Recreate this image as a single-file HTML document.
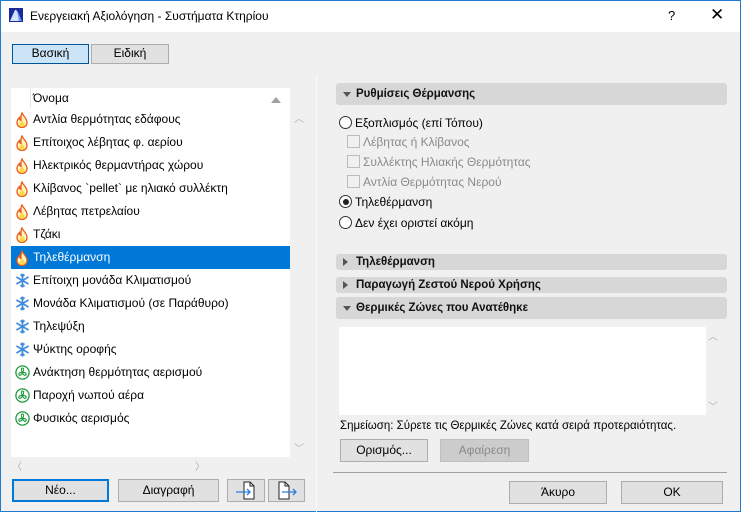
<!DOCTYPE html>
<html><head><meta charset="utf-8"><style>
*{box-sizing:border-box;margin:0;padding:0}
body{width:741px;height:512px;overflow:hidden;background:#f0f0f0;font-family:"Liberation Sans","DejaVu Sans",sans-serif;font-size:12px;color:#000;position:relative}
.a{position:absolute}
.win{left:0;top:0;width:741px;height:512px;border:1px solid #1e7bd0}
.tb{left:1px;top:1px;width:739px;height:31px;background:#fff}
.btn{position:absolute;background:#e1e1e1;border:1px solid #adadad;text-align:center;font-size:12px}
.row{position:absolute;left:11px;width:279px;height:23px;line-height:23px;padding-left:22px;white-space:nowrap;font-size:12px}
.row svg{position:absolute;left:4px;top:4px}
.sel{background:#0078d7;color:#fff}
.hdr{position:absolute;left:336px;width:391px;background:#d7d7d7;border-radius:3px;font-weight:bold;font-size:11.5px;padding-left:20px;color:#111}
.tri{position:absolute;left:7px;width:0;height:0}
.down{border-left:4px solid transparent;border-right:4px solid transparent;border-top:5px solid #555}
.right{border-top:4px solid transparent;border-bottom:4px solid transparent;border-left:5px solid #555}
.rad{position:absolute;width:13px;height:13px;border:1px solid #333;border-radius:50%;background:#fff}
.chk{position:absolute;width:13px;height:13px;border:1px solid #bcbcbc;background:#f0f0f0}
.lbl{position:absolute;font-size:12px;white-space:nowrap}
.dis{color:#8a8a8a}
.ar{position:absolute;color:#b0b0b0;font-size:10px}
</style></head><body>
<div class="a win"></div>
<div class="a tb"></div>
<svg class="a" style="left:9px;top:8px" width="14" height="14" viewBox="0 0 14 14"><rect width="14" height="14" fill="#1a2a9a"/><path d="M1 13 L6 2 Q9 1 10 13Z" fill="#cfe3ff"/><path d="M8 2 L13 13 H10Z" fill="#6a8bff"/></svg>
<div class="lbl" style="left:30px;top:9px;font-size:12px">Ενεργειακή Αξιολόγηση - Συστήματα Κτηρίου</div>
<div class="lbl" style="left:668px;top:8px;font-size:13px">?</div>
<div class="lbl" style="left:710px;top:5px;font-size:17px;font-weight:300">✕</div>

<div class="btn" style="left:12px;top:44px;width:77px;height:20px;line-height:17px;background:#cce4f7;border:1px solid #005499">Βασική</div>
<div class="btn" style="left:91px;top:44px;width:78px;height:20px;line-height:17px">Ειδική</div>

<div class="a" style="left:316px;top:75px;width:1px;height:437px;background:#fbfbfb"></div>

<div class="a" style="left:11px;top:88px;width:279px;height:369px;background:#fff"></div>
<div class="a" style="left:30px;top:88px;width:1px;height:20px;background:#e5e5e5"></div>
<div class="lbl" style="left:33px;top:91px">Όνομα</div>
<div class="a" style="left:271px;top:97px;border-left:5px solid transparent;border-right:5px solid transparent;border-bottom:6px solid #a0a0a0"></div>

<div id="rows"></div>
<div class="ar" style="left:294px;top:110px">︿</div>
<div class="ar" style="left:294px;top:440px">﹀</div>
<div class="ar" style="left:12px;top:458px">〈</div>
<div class="ar" style="left:195px;top:458px">〉</div>

<div class="btn" style="left:12px;top:479px;width:97px;height:23px;line-height:19px;border:2px solid #0078d7">Νέο...</div>
<div class="btn" style="left:118px;top:479px;width:101px;height:23px;line-height:21px">Διαγραφή</div>
<div class="btn" style="left:227px;top:479px;width:38px;height:23px"><svg width="36" height="21" viewBox="0 0 36 21"><path d="M16 2h6l4 4v13H16z" fill="#fff" stroke="#222"/><path d="M22 2v4h4" fill="none" stroke="#222"/><path d="M8 12h14M19 9l3 3-3 3" stroke="#2a7ce0" stroke-width="1.3" fill="none"/></svg></div>
<div class="btn" style="left:268px;top:479px;width:37px;height:23px"><svg width="35" height="21" viewBox="0 0 35 21"><path d="M10 2h6l4 4v13H10z" fill="#fff" stroke="#222"/><path d="M16 2v4h4" fill="none" stroke="#222"/><path d="M13 12h14M24 9l3 3-3 3" stroke="#2a7ce0" stroke-width="1.3" fill="none"/></svg></div>

<div class="hdr" style="top:83px;height:22px;line-height:22px"><div class="tri down" style="top:9px"></div>Ρυθμίσεις Θέρμανσης</div>
<div class="rad" style="left:339px;top:116px"></div><div class="lbl" style="left:355px;top:116px">Εξοπλισμός (επί Τόπου)</div>
<div class="chk" style="left:347px;top:135px"></div><div class="lbl dis" style="left:363px;top:135px">Λέβητας ή Κλίβανος</div>
<div class="chk" style="left:347px;top:155px"></div><div class="lbl dis" style="left:363px;top:155px">Συλλέκτης Ηλιακής Θερμότητας</div>
<div class="chk" style="left:347px;top:175px"></div><div class="lbl dis" style="left:363px;top:175px">Αντλία Θερμότητας Νερού</div>
<div class="rad" style="left:339px;top:195px"><div class="a" style="left:2.5px;top:2.5px;width:6px;height:6px;border-radius:50%;background:#222"></div></div><div class="lbl" style="left:355px;top:195px">Τηλεθέρμανση</div>
<div class="rad" style="left:339px;top:216px"></div><div class="lbl" style="left:355px;top:216px">Δεν έχει οριστεί ακόμη</div>

<div class="hdr" style="top:254px;height:16px;line-height:16px"><div class="tri right" style="top:4px"></div>Τηλεθέρμανση</div>
<div class="hdr" style="top:277px;height:16px;line-height:16px"><div class="tri right" style="top:4px"></div>Παραγωγή Ζεστού Νερού Χρήσης</div>
<div class="hdr" style="top:297px;height:22px;line-height:22px"><div class="tri down" style="top:9px"></div>Θερμικές Ζώνες που Ανατέθηκε</div>
<div class="a" style="left:339px;top:327px;width:367px;height:88px;background:#fff"></div>
<div class="ar" style="left:708px;top:328px">︿</div>
<div class="ar" style="left:708px;top:398px">﹀</div>
<div class="lbl" style="left:340px;top:420px;font-size:11.5px">Σημείωση: Σύρετε τις Θερμικές Ζώνες κατά σειρά προτεραιότητας.</div>
<div class="btn" style="left:340px;top:439px;width:88px;height:23px;line-height:21px">Ορισμός...</div>
<div class="btn dis" style="left:440px;top:439px;width:89px;height:23px;line-height:21px;background:#cccccc;border-color:#bfbfbf;color:#8a8a8a">Αφαίρεση</div>
<div class="a" style="left:333px;top:472px;width:394px;height:1px;background:#a0a0a0"></div>
<div class="btn" style="left:509px;top:481px;width:98px;height:23px;line-height:21px">Άκυρο</div>
<div class="btn" style="left:621px;top:481px;width:102px;height:23px;line-height:21px">OK</div>

<script>
var flame='<svg width="14" height="16" viewBox="0 0 14 16"><path d="M7 1C8 4 12 6 12 10.5 12 13.5 9.8 15.5 7 15.5 4.2 15.5 2 13.5 2 10.5 2 8 3.5 6.5 4.5 5.5 4.5 7.5 5.5 8.5 6 8.5 6 6 5.5 3.5 7 1Z" fill="#fff3c0" stroke="#ea5a1c" stroke-width="1.3"/><path d="M7 8.5C8.7 10.2 9.8 11.5 9.8 12.8 9.8 14.2 8.6 15 7 15 5.4 15 4.2 14.2 4.2 12.8 4.2 11.5 5.8 10.2 7 8.5Z" fill="#ffd84a"/></svg>';
var snow='<svg width="15" height="15" viewBox="0 0 15 15" stroke="#3d8be0" stroke-width="1.6" fill="none"><path d="M7.5 0.5v14M1.4 4l12.2 7M1.4 11l12.2-7M5.5 1.5l2 2 2-2M5.5 13.5l2-2 2 2"/></svg>';
var fan='<svg width="15" height="15" viewBox="0 0 15 15"><circle cx="7.5" cy="7.5" r="6.6" fill="#fff" stroke="#1e9b3c" stroke-width="1.3"/><path d="M7.5 7.5C6 5.5 6 3 7.5 3 9 3 9 5.5 7.5 7.5ZM7.5 7.5C10 7 11.8 8.5 11 9.8 10.3 11 8 10 7.5 7.5ZM7.5 7.5C7 10 4.5 11 4 9.8 3.3 8.5 5 7 7.5 7.5Z" fill="none" stroke="#1e9b3c" stroke-width="1.1"/></svg>';
var items=[['Αντλία θερμότητας εδάφους',flame],['Επίτοιχος λέβητας φ. αερίου',flame],['Ηλεκτρικός θερμαντήρας χώρου',flame],['Κλίβανος `pellet` με ηλιακό συλλέκτη',flame],['Λέβητας πετρελαίου',flame],['Τζάκι',flame],['Τηλεθέρμανση',flame],['Επίτοιχη μονάδα Κλιματισμού',snow],['Μονάδα Κλιματισμού (σε Παράθυρο)',snow],['Τηλεψύξη',snow],['Ψύκτης οροφής',snow],['Ανάκτηση θερμότητας αερισμού',fan],['Παροχή νωπού αέρα',fan],['Φυσικός αερισμός',fan]];
var h='';items.forEach(function(it,i){h+='<div class="row'+(i==6?' sel':'')+'" style="top:'+(108+i*23)+'px">'+it[1]+it[0]+'</div>';});
document.getElementById('rows').outerHTML=h;
</script>
</body></html>
